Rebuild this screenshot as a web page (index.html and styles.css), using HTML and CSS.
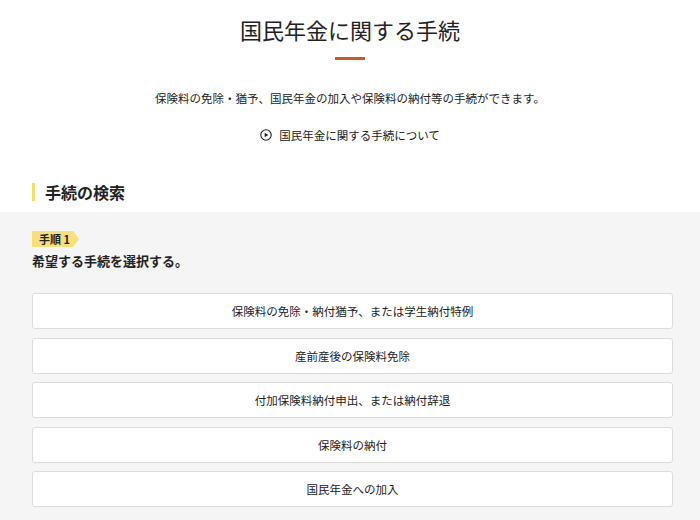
FILE: index.html
```html
<!DOCTYPE html>
<html lang="ja">
<head>
<meta charset="utf-8">
<link rel="stylesheet" href="styles.css">
</head>
<body>
<header class="intro">
  <h1 class="title">国民年金に関する手続</h1>
  <div class="title-rule"></div>
  <p class="lead">保険料の免除・猶予、国民年金の加入や保険料の納付等の手続ができます。</p>
  <a class="about-link" href="#">
    <svg class="play" width="12" height="12" viewBox="0 0 12 12"><circle cx="6" cy="6" r="5.2" fill="none" stroke="#222" stroke-width="1.1"/><path d="M4.7 3.8 L8.3 6 L4.7 8.2 Z" fill="#222"/></svg>
    <span>国民年金に関する手続について</span>
  </a>
</header>
<h2 class="section-heading">手続の検索</h2>
<section class="search">
  <div class="step">手順 1</div>
  <p class="step-text">希望する手続を選択する。</p>
  <div class="options">
    <button class="option">保険料の免除・納付猶予、または学生納付特例</button>
    <button class="option">産前産後の保険料免除</button>
    <button class="option">付加保険料納付申出、または納付辞退</button>
    <button class="option">保険料の納付</button>
    <button class="option">国民年金への加入</button>
  </div>
</section>
</body>
</html>
```

FILE: styles.css
```css
html, body {
  margin: 0;
  padding: 0;
  background: #fff;
  font-family: "Noto Sans CJK JP", "Noto Sans", sans-serif;
  color: #222;
}
.intro {
  display: flex;
  flex-direction: column;
  align-items: center;
  padding-top: 13px;
}
.title {
  margin: 0;
  font-size: 22px;
  font-weight: 400;
  line-height: 32px;
}
.title-rule {
  width: 30px;
  height: 3px;
  background: #c9582b;
  margin-top: 12px;
}
.lead {
  margin: 28px 0 0;
  font-size: 11.5px;
  line-height: 20px;
}
.about-link {
  margin-top: 17px;
  display: flex;
  align-items: center;
  gap: 7px;
  font-size: 11.5px;
  line-height: 20px;
  color: #222;
  text-decoration: none;
}
.play { display: block; }
.section-heading {
  margin: 38px 0 0 32px;
  padding-left: 10px;
  border-left: 3px solid #f6da72;
  font-size: 16px;
  font-weight: 700;
  line-height: 18px;
  height: 18px;
}
.search {
  margin-top: 11px;
  background: #f5f5f5;
  padding: 13px 27px 20px 32px;
}
.step {
  display: inline-block;
  position: relative;
  background: #f7e07c;
  font-size: 11px;
  font-weight: 700;
  line-height: 16px;
  height: 16px;
  padding: 0 3px 0 7px;
}
.step::after {
  content: "";
  position: absolute;
  right: -6px;
  top: 0;
  border-left: 6px solid #f7e07c;
  border-top: 8px solid transparent;
  border-bottom: 8px solid transparent;
}
.step-text {
  margin: 2px 0 0;
  font-size: 13px;
  font-weight: 700;
  line-height: 20px;
}
.options {
  margin-top: 22px;
  display: flex;
  flex-direction: column;
  gap: 8.5px;
}
.option {
  display: block;
  width: 100%;
  height: 36px;
  background: #fff;
  border: 1px solid #dcdcdc;
  border-radius: 3px;
  font-family: inherit;
  font-size: 11.5px;
  color: #222;
  text-align: center;
  padding: 0;
}
```
